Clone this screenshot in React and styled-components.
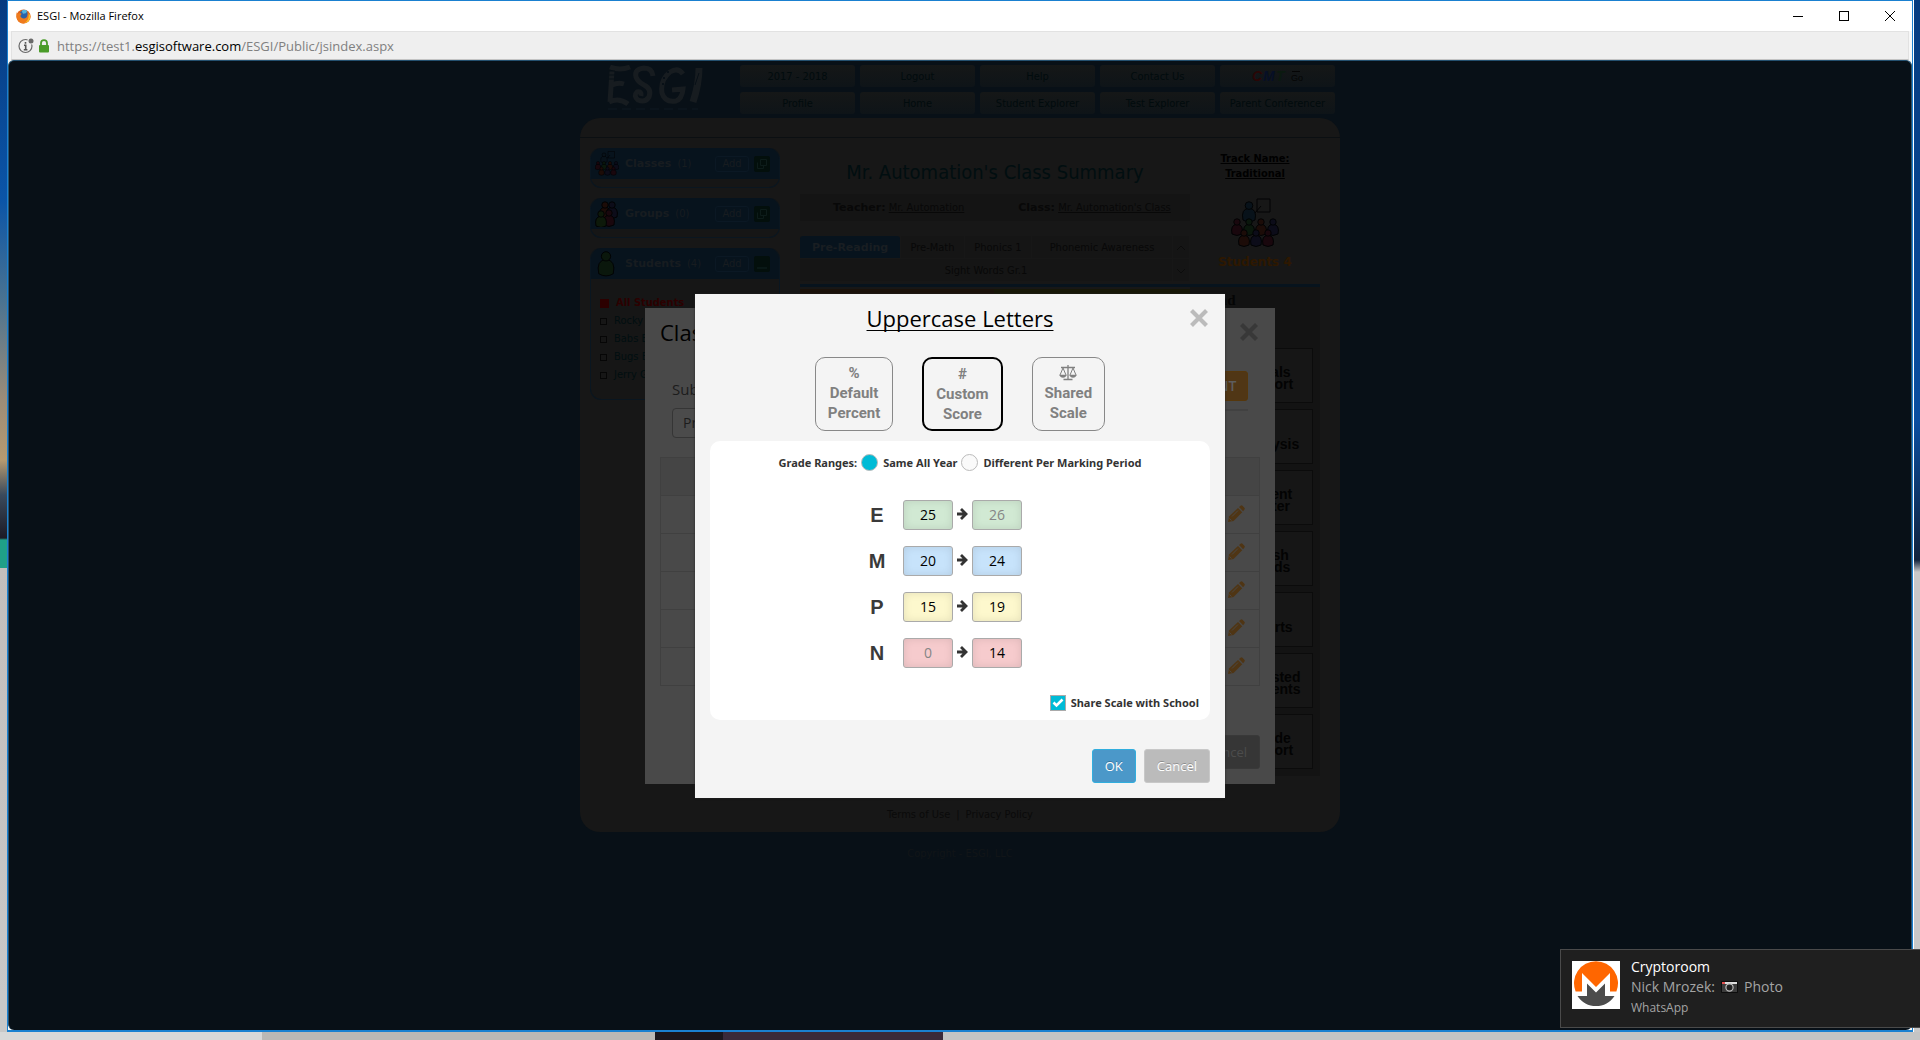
import React from "react";
import styled, { createGlobalStyle, css } from "styled-components";

const GlobalStyle = createGlobalStyle`
  * { box-sizing: border-box; }
  html, body { margin: 0; height: 100%; overflow: hidden; }
  body { font-family: "Open Sans", "Noto Sans", sans-serif; }
  button, input, select { font: inherit; margin: 0; }
  h1, h2, p, ul { margin: 0; padding: 0; }
  a { color: inherit; text-decoration: none; }
`;

const tahoma = `"DejaVu Sans Condensed", "DejaVu Sans", sans-serif`;
const verdana = `"DejaVu Sans", sans-serif`;

/* ---------- desktop and browser window ---------- */

const Desktop = styled.div`
  position: relative;
  height: 100vh;
  padding: 0 7px 8px;
  background:
    linear-gradient(90deg, #d8d8d8, #d8d8d8 262px, #bbb8b5 262px, #bbb8b5 655px, #1b161c 655px, #1b161c 723px, #3a2a3a 723px, #3a2a3a 943px, #c4c4c4 943px) bottom / 100% 8px no-repeat,
    linear-gradient(180deg, #063c80 0, #0a4ea0 420px, #12233c 560px, #c8c8c8 572px) right / 6px 100% no-repeat,
    linear-gradient(180deg, #063a80 0, #0b55a8 200px, #4a7391 300px, #9b8c78 400px, #b69a70 460px, #3a4a5c 495px, #1c1a26 538px, #1fa088 540px, #1fa088 568px, #c2bebc 568px, #c8c8c8 1000px) left / 7px 100% no-repeat;
`;

const Window = styled.div`
  display: flex;
  flex-direction: column;
  height: 100%;
  border: 1px solid #1a80d0;
  border-bottom-width: 2px;
  background: #f7f7f7;
`;

const TitleBar = styled.header`
  display: flex;
  align-items: center;
  gap: 6px;
  flex: none;
  height: 30px;
  padding: 0 8px;
  background: #fff;
  color: #000;
  font: 11px/16px "Open Sans", sans-serif;
`;

const WindowControls = styled.div`
  display: flex;
  gap: 17px;
  margin-left: auto;
`;

const WindowButton = styled.button`
  display: flex;
  align-items: center;
  justify-content: center;
  width: 29px;
  height: 28px;
  padding: 0;
  border: 0;
  background: none;
`;

const UrlBar = styled.div`
  display: flex;
  align-items: center;
  gap: 4px;
  flex: none;
  height: 29px;
  margin: 0 3px;
  padding: 0 6px;
  border: 1px solid #e2e2e2;
  border-bottom-color: #c4c4c4;
  background: #efefef;
  color: #808080;
  font: 13px/20px "Open Sans", sans-serif;
  b { font-weight: 400; color: #000; }
  span { margin-left: 3px; }
`;

const Page = styled.div`
  position: relative;
  flex: 1;
  min-height: 0;
  overflow: hidden;
  border: 1px solid #24506f;
  border-bottom: 0;
  border-radius: 6px;
  background: #081017;
  font-family: ${tahoma};
`;

/* ---------- dimmed site ---------- */

const Site = styled.div`
  width: 760px;
  max-width: 100%;
  margin: 0 auto;
`;

const SiteHeader = styled.div`
  display: flex;
  justify-content: space-between;
  height: 57px;
  padding: 4px 5px 0 26px;
`;

const NavGrid = styled.nav`
  display: grid;
  grid-template-columns: repeat(5, 115px);
  gap: 5px;
  align-content: start;
`;

const NavLink = styled.a`
  display: flex;
  align-items: center;
  justify-content: center;
  height: 22px;
  border-radius: 3px;
  background: linear-gradient(#151717, #0e1418);
  color: #010b0d;
  font-size: 11px;
`;

const Board = styled.main`
  height: 714px;
  border-radius: 20px;
  background: #171717;
`;

const BoardTop = styled.div`
  height: 20px;
  border-bottom: 1px solid #0b0f12;
`;

const Columns = styled.div`
  display: flex;
  gap: 20px;
  height: 669px;
  padding: 10px 20px 0 10px;
`;

const Sidebar = styled.aside`
  display: flex;
  flex: none;
  flex-direction: column;
  gap: 10px;
  width: 190px;
`;

const SideCard = styled.section`
  border: 1px solid #0a1620;
  border-top: 0;
  border-radius: 11px;
  background: #161616;
  min-height: 40px;
`;

const SideHead = styled.div`
  display: flex;
  align-items: center;
  height: 31px;
  padding: 0 9px 0 4px;
  border-radius: 11px 11px 0 0;
  background: #07131d;
  color: #171c20;
  font-size: 11px;
  strong { margin: 0 6px; font-family: ${verdana}; font-size: 11px; }
  svg { flex: none; }
`;

const AddButton = styled.button`
  width: 34px;
  height: 16px;
  margin: 0 5px 0 auto;
  padding: 0;
  border: 1px solid #0b1824;
  border-radius: 3px;
  background: transparent;
  color: #171c20;
  font-size: 11px;
  line-height: 14px;
`;

const StudentList = styled.ul`
  height: 120px;
  padding: 15px 9px 0;
  list-style: none;
  color: #010e10;
  font-size: 11px;
  line-height: 18px;
`;

const StudentItem = styled.li`
  display: flex;
  align-items: center;
  gap: 7px;
  color: ${(p) => (p.$all ? "#2c0000" : "inherit")};
  font-weight: ${(p) => (p.$all ? 700 : 400)};
  &::before {
    content: "";
    width: ${(p) => (p.$all ? 7 : 5)}px;
    height: ${(p) => (p.$all ? 7 : 5)}px;
    border: 1px solid ${(p) => (p.$all ? "#2c0000" : "#060606")};
    background: ${(p) => (p.$all ? "#2c0000" : "transparent")};
  }
`;

const Summary = styled.div`
  flex: 1;
  min-width: 0;
`;

const SummaryTop = styled.div`
  display: flex;
  height: 136px;
`;

const SummaryMain = styled.div`
  width: 390px;
`;

const SummaryTitle = styled.h1`
  height: 46px;
  padding-top: 12px;
  text-align: center;
  color: #010e10;
  font-size: 20px;
  line-height: 24px;
  font-weight: 400;
`;

const TeacherBar = styled.div`
  display: flex;
  gap: 54px;
  align-items: center;
  height: 27px;
  padding-left: 33px;
  background: #141414;
  color: #080808;
  font-size: 11px;
  b { font-family: ${verdana}; font-size: 11px; }
  a { text-decoration: underline; }
`;

const Tabs = styled.div`
  display: grid;
  grid-template-columns: 100px 63px 66px 140px 16px;
  gap: 1px;
  margin-top: 15px;
  color: #080808;
  font-size: 11px;
`;

const Tab = styled.button`
  height: 22px;
  padding: 0;
  border: 0;
  background: #151515;
  color: inherit;
  font-size: 11px;
  ${(p) => p.$active && css`
    border-radius: 3px 3px 0 0;
    background: #07131d;
    color: #191e22;
    font-family: ${verdana};
    font-weight: 700;
  `}
  ${(p) => p.$wide && css`grid-column: 1 / 5;`}
`;

const Track = styled.div`
  flex: 1;
  display: flex;
  flex-direction: column;
  align-items: center;
  padding-top: 3px;
  color: #000;
  font: 700 11px/15px ${tahoma};
  a { text-decoration: underline; text-align: center; }
  svg { margin: 17px 0 5px; }
  strong { color: #2e1800; font: 700 12px/18px ${verdana}; }
`;

const Results = styled.div`
  display: flex;
  height: 492px;
  border-top: 3px solid #07131d;
`;

const Strip = styled.div`
  width: ${(p) => p.$width}px;
  height: 20px;
  margin-top: 2px;
  background: ${(p) => p.$color};
`;

const Rail = styled.div`
  display: flex;
  flex-direction: column;
  align-items: flex-end;
  gap: 6px;
  flex: 1;
  padding: 2px 7px 0 0;
  background: #131313;
`;

const RailLabel = styled.div`
  width: 120px;
  height: 53px;
  color: #050505;
  font: 700 15px/22px "Liberation Serif", serif;
`;

const RailCard = styled.a`
  display: flex;
  align-items: center;
  justify-content: center;
  width: 85px;
  height: 55px;
  padding-top: ${(p) => (p.$single ? 14 : 4)}px;
  border: 1px solid #0b0b0b;
  background: #161616;
  color: #030303;
  text-align: center;
  white-space: pre-line;
  font: 700 14px/12px "Liberation Sans", sans-serif;
`;

const BoardFooter = styled.footer`
  display: flex;
  justify-content: center;
  gap: 6px;
  color: #0a0a0a;
  font: 11px/16px ${tahoma};
`;

const Copyright = styled.p`
  padding-top: 14px;
  text-align: center;
  color: #111518;
  font: 11px/16px ${tahoma};
`;

/* ---------- dialogs ---------- */

const Overlay = styled.div`
  position: absolute;
  inset: 0;
  display: flex;
  align-items: center;
  justify-content: center;
`;

const GradeDialog = styled.section`
  display: flex;
  flex-direction: column;
  width: 630px;
  height: 476px;
  padding: 11px 15px 15px;
  background: #494949;
  color: #000;
  font-family: "Open Sans", sans-serif;
`;

const DialogHead = styled.div`
  display: flex;
  justify-content: space-between;
  padding-right: 2px;
  h2 { font-size: 22px; line-height: 26px; font-weight: 400; }
`;

const CloseButton = styled.button`
  display: flex;
  align-items: center;
  justify-content: center;
  width: 18px;
  height: 26px;
  padding: 0;
  border: 0;
  background: none;
  color: ${(p) => p.$color};
`;

const FilterRow = styled.div`
  display: flex;
  justify-content: space-between;
  align-items: flex-start;
  margin: 26px 12px 0;
`;

const Subject = styled.label`
  display: flex;
  flex-direction: column;
  gap: 7px;
  margin-top: 6px;
  color: #1c1c1c;
  font-size: 15px;
  line-height: 24px;
`;

const SubjectSelect = styled.select`
  width: 190px;
  height: 30px;
  padding: 0 6px;
  border: 1px solid #353535;
  border-radius: 4px;
  background: #4b4b4b;
  color: #1c1c1c;
  font-size: 14px;
`;

const PrintWrap = styled.div`
  width: 300px;
  height: 40px;
  border-bottom: 2px solid #414141;
  text-align: right;
`;

const PrintButton = styled.button`
  width: 64px;
  height: 30px;
  padding: 0;
  border: 1px solid #55370c;
  border-radius: 3px;
  background: #503615;
  color: #5d5d5d;
  font-size: 14px;
  font-weight: 600;
`;

const TestTable = styled.table`
  width: 100%;
  margin-top: 19px;
  border-collapse: collapse;
  border: 1px solid #404040;
  th { background: #454545; }
  th, td {
    height: 38px;
    padding: 0 14px;
    border-bottom: 1px solid #404040;
    text-align: right;
  }
  svg { display: block; margin-left: auto; }
`;

const BackCancel = styled.button`
  width: 66px;
  height: 34px;
  margin: auto 0 0 auto;
  border: 1px solid #393939;
  border-radius: 3px;
  background: #363636;
  color: #4c4c4c;
  font-size: 13px;
`;

const ScoreDialog = styled.section`
  display: flex;
  flex-direction: column;
  width: 530px;
  height: 504px;
  padding: 11px 15px 15px;
  background: #f4f4f4;
  color: #333;
  font-family: "Open Sans", sans-serif;
  box-shadow: 0 0 2px #222;
`;

const ScoreHead = styled.div`
  display: grid;
  grid-template-columns: 18px 1fr 18px;
  padding: 0 2px;
  h2 {
    text-align: center;
    color: #000;
    font-size: 22px;
    line-height: 26px;
    font-weight: 400;
    text-decoration: underline;
    text-decoration-thickness: 1px;
    text-underline-offset: 3px;
    text-decoration-skip-ink: none;
  }
`;

const ModeRow = styled.div`
  display: flex;
  justify-content: center;
  gap: 29px;
  margin-top: 26px;
`;

const ModeButton = styled.button`
  display: flex;
  flex-direction: column;
  align-items: center;
  height: 74px;
  padding: 5px 12px;
  border: ${(p) => (p.$active ? "2px solid #000" : "1px solid #888")};
  border-radius: 10px;
  background: transparent;
  color: #808080;
  font: 700 15px/20px Roboto, sans-serif;
  white-space: pre-line;
  svg { margin: 2px 0; }
`;

const ScorePanel = styled.div`
  display: flex;
  flex-direction: column;
  align-items: center;
  height: 279px;
  margin: 10px 0 0;
  padding: 13px 11px 8px;
  border-radius: 10px;
  background: #fff;
  color: #333;
`;

const RangeRow = styled.div`
  display: flex;
  align-items: center;
  gap: 4px;
  height: 18px;
  font: 700 11px/18px "Noto Sans", sans-serif;
`;

const OptionLabel = styled.label`
  display: flex;
  align-items: center;
  gap: 5px;
  font: 700 11px/18px "Noto Sans", sans-serif;
`;

const Radio = styled.input`
  appearance: none;
  width: 17px;
  height: 17px;
  border: 1px solid #bbb;
  border-radius: 50%;
  background: #fafafa;
  &:checked { background: #00bbd6; }
`;

const ScoreRows = styled.div`
  display: flex;
  flex-direction: column;
  gap: 16px;
  width: 184px;
  margin-top: 28px;
`;

const ScoreRow = styled.div`
  display: flex;
  align-items: center;
  gap: 3px;
  height: 30px;
`;

const Grade = styled.label`
  width: 18px;
  margin-right: 14px;
  text-align: center;
  color: #3a3a3a;
  font: 700 20px/30px "Liberation Sans", sans-serif;
`;

const ScoreInput = styled.input`
  width: 50px;
  height: 30px;
  padding: 0;
  border: 1px solid #aaa;
  border-radius: 3px;
  background: ${(p) => p.$tone};
  box-shadow: inset 0 0 8px rgba(0, 0, 0, 0.1);
  color: #000;
  text-align: center;
  font-size: 14px;
  &:disabled { color: #858585; }
`;

const ShareLabel = styled(OptionLabel)`
  margin: auto 0 0 auto;
`;

const CheckWrap = styled.span`
  display: grid;
  place-items: center;
  input, svg { grid-area: 1 / 1; }
  svg { pointer-events: none; }
`;

const Check = styled.input`
  appearance: none;
  width: 16px;
  height: 16px;
  border: 1px solid #aaa;
  background: #fff;
  &:checked { background: #00bbd6; }
`;

const Actions = styled.div`
  display: flex;
  justify-content: flex-end;
  gap: 8px;
  margin-top: auto;
`;

const ActionButton = styled.button`
  height: 34px;
  padding: 0 12px;
  border: 1px solid ${(p) => (p.$primary ? "#31aede" : "#c8c8c8")};
  border-radius: 3px;
  background: ${(p) => (p.$primary ? "#4b98c9" : "#bbb")};
  color: #fff;
  font-size: 13px;
  text-shadow: 0 -1px 0 rgba(0, 0, 0, 0.25);
`;

/* ---------- notification ---------- */

const Toast = styled.aside`
  position: absolute;
  right: 0;
  bottom: 12px;
  display: flex;
  gap: 11px;
  width: 360px;
  height: 79px;
  padding: 11px;
  border: 1px solid #4a4a4a;
  border-right: 0;
  background: #1f1f1f;
  color: #a4a4a4;
  font: 14px/20px "Open Sans", sans-serif;
  svg { flex: none; }
`;

const ToastText = styled.div`
  margin-top: -4px;
  strong { display: block; font-weight: 400; color: #fff; }
  p { display: flex; align-items: center; gap: 6px; }
  small { display: block; font-size: 12px; line-height: 22px; }
`;

/* ---------- drawings ---------- */

const FirefoxIcon = () => (
  <svg width="15" height="15" viewBox="0 0 16 16" aria-hidden="true">
    <circle cx="8" cy="8" r="7.500" fill="#e2631b" />
    <circle cx="8.600" cy="6.400" r="5" fill="#2b63a8" />
    <path d="M6 2c2-1.600 4-1.400 6 0l-1.500 2.500-3 .5z" fill="#53b4dd" />
    <path d="M.8 3.500 2.300 5C3.500 3.800 5 4 6 5L4.600 7.500c1 3 4.500 3.500 7 1 1-2 .8-4.500.4-6 3 2.200 4.200 5.500 2.800 8.500C12.500 16.500 4 17 1.300 11.500.2 9 .1 6 .8 3.500z" fill="#ef7b1d" />
    <path d="M14.900 6c1 4-1 8-5.900 9 3-2 5-5 4.500-9.500z" fill="#f8c32a" />
  </svg>
);

const InfoIcon = () => (
  <svg width="16" height="16" viewBox="0 0 16 16" aria-hidden="true">
    <circle cx="7.500" cy="8" r="6.500" fill="none" stroke="#6a6a6a" strokeWidth="1.200" />
    <circle cx="13" cy="3" r="3.600" fill="#efefef" />
    <circle cx="13" cy="3" r="2.500" fill="#6a6a6a" />
    <path d="M7.500 4v1.800M6 7.200h1.700v4.300M5.800 11.700h3.600" stroke="#555" strokeWidth="1.600" fill="none" />
  </svg>
);

const LockIcon = () => (
  <svg width="12" height="14" viewBox="0 0 12 14" aria-hidden="true">
    <rect x="1" y="6" width="10" height="7.500" rx="1" fill="#4a9c28" />
    <path d="M3 7V4.200a3 3 0 0 1 6 0V7" fill="none" stroke="#4a9c28" strokeWidth="1.800" />
  </svg>
);

const Logo = () => (
  <svg width="100" height="50" viewBox="0 0 100 50" role="img" aria-label="ESGI" fill="none" stroke="#171c20" strokeWidth="4">
    <path d="M6 6q-1 16-2 31M4 2q10 4 20 0M6 20q6-3 12-1M3 37q10-5 19 2" strokeWidth="5" />
    <path d="M2 6h7M2 10h7M2 14h7" stroke="#081017" strokeWidth="1" />
    <path d="M47 11q-1-8-9-8-10 1-8 9 2 5 8 8 8 4 5 12-4 6-11 3-5-4-1-8 5-1 4 4" strokeWidth="5" />
    <path d="M77 9q-5-7-13-2-10 8-8 21 3 10 14 8 6-2 7-12l-11 1" strokeWidth="5" />
    <path d="M57 13h2M61 7h2M56 19h2" stroke="#081017" strokeWidth="2" />
    <path d="M93 3q0 16-6 34" strokeWidth="7" />
    <path d="M93 8 89 20" stroke="#081017" strokeWidth="1" />
    <path d="M2 44h90" stroke="#0b141c" strokeWidth="2" strokeDasharray="9 5" />
  </svg>
);

const Person = ({ x, y, s = 1, fill }) => (
  <g transform={`translate(${x} ${y}) scale(${s})`} fill={fill} stroke="#020304" strokeWidth={1 / s}>
    <path d="M-5 15q-2-9 5-10 7 1 5 10-5 3-10 0z" />
    <circle cx="0" cy="3" r="3.200" />
  </g>
);

const ClassIcon = ({ width, height }) => (
  <svg width={width} height={height} viewBox="0 0 48 50" aria-hidden="true">
    <path d="M26 1h13v13H26zM24 15l6-7" fill="none" stroke="#020304" />
    <Person x={18} y={4} s={1.2} fill="#08121a" />
    <Person x={6} y={21} fill="#19070d" />
    <Person x={18} y={21} fill="#0a170c" />
    <Person x={30} y={21} fill="#1c0c08" />
    <Person x={42} y={21} fill="#0c0c19" />
    <Person x={13} y={32} fill="#1c0c08" />
    <Person x={25} y={32} fill="#0c0c19" />
    <Person x={37} y={32} fill="#19070d" />
  </svg>
);

const GroupIcon = () => (
  <svg width="24" height="26" viewBox="0 0 24 26" aria-hidden="true">
    <Person x={10} y={1} fill="#1c0c08" />
    <Person x={17} y={1} fill="#0c0c19" />
    <Person x={14} y={9} fill="#19070d" />
    <Person x={6} y={10} fill="#0d190a" />
  </svg>
);

const StudentIcon = () => (
  <svg width="24" height="26" viewBox="0 0 24 26" aria-hidden="true">
    <Person x={11} y={1} s={1.45} fill="#0a170c" />
  </svg>
);

const PopIcon = ({ open }) => (
  <svg width="16" height="16" viewBox="0 0 16 16" aria-hidden="true">
    <rect width="16" height="16" rx="2" fill="#030f0c" />
    {open ? <path d="M3 12h10" stroke="#0d1c1a" strokeWidth="1.500" /> : <path d="M6.500 3.500h6v6h-6zM3.500 6.500v6h6v-3" fill="none" stroke="#0d1c1a" />}
  </svg>
);

const CloseIcon = () => (
  <svg width="18" height="18" viewBox="0 0 18 18" aria-hidden="true">
    <path d="M1.500 1.500l15 15M16.500 1.500l-15 15" stroke="currentColor" strokeWidth="4.200" />
  </svg>
);

const PencilIcon = () => (
  <svg width="18" height="18" viewBox="0 0 18 18" aria-hidden="true" fill="#4f3514">
    <path d="M1 17l1-5.500L11 3l4.200 4.200L6.500 16z" />
    <path d="M12 2l1.500-1.300q1-.8 2 .1l1.900 1.900q.8 1-.1 2L16.100 6.200z" />
    <path d="M5 11.500l6-6M2.500 13.500l2 2" stroke="#494949" strokeWidth=".9" />
  </svg>
);

const ScaleIcon = () => (
  <svg width="18" height="16" viewBox="0 0 18 16" aria-hidden="true" fill="none" stroke="#808080">
    <path d="M2 2.500h14M9 0v14M4.500 14.500h9" strokeWidth="1.300" />
    <path d="M4 3 1 10M4 3l3 7M14 3l-3 7M14 3l3 7" />
    <path d="M.5 10h7q-1 2.500-3.500 2.500T.5 10zM10.500 10h7q-1 2.500-3.500 2.500T10.500 10z" fill="#808080" strokeWidth=".5" />
  </svg>
);

const ArrowIcon = () => (
  <svg width="13" height="16" viewBox="0 0 13 16" aria-hidden="true">
    <path d="M5 2l5 5-5 5M1 7h9" fill="none" stroke="#333" strokeWidth="2.800" />
  </svg>
);

const TickIcon = () => (
  <svg width="12" height="12" viewBox="0 0 12 12" aria-hidden="true">
    <path d="M1.500 5.500l3 3 6-6" fill="none" stroke="#fff" strokeWidth="2.600" />
  </svg>
);

const MoneroIcon = () => (
  <svg width="48" height="48" viewBox="0 0 48 48" role="img" aria-label="Cryptoroom avatar">
    <rect width="48" height="48" fill="#fff" />
    <path d="M3.600 30.500A22 22 0 1 1 44.400 30.500H38V12L24 26 10 12v18.500z" fill="#ff6600" />
    <path d="M5.500 35H15V22.500l9 9 9-9V35h9.500a22 22 0 0 1-37 0z" fill="#4c4c4c" />
  </svg>
);

const CameraIcon = () => (
  <svg width="17" height="14" viewBox="0 0 17 14" role="img" aria-label="camera">
    <rect x="0" y="1" width="17" height="12" rx="1" fill="#0d0d0d" />
    <rect x="1" y="4" width="15" height="8" fill="#3c3c3c" />
    <rect x="1" y="2" width="15" height="2" fill="#ddd" />
    <rect x="1" y="2" width="3" height="2" fill="#e05050" />
    <circle cx="8.500" cy="7.500" r="3.600" fill="#222" stroke="#bbb" strokeWidth="1.200" />
  </svg>
);

/* ---------- data ---------- */

const nav = ["2017 - 2018", "Logout", "Help", "Contact Us", null, "Profile", "Home", "Student Explorer", "Test Explorer", "Parent Conferencer"];
const rail = ["Totals\nReport", "Analysis", "Parent\nLetter", "Flash\nCards", "Charts", "Untested\nStudents", "Grade\nReport"];
const scores = [
  { grade: "E", from: 25, to: 26, tone: "#d1e9d3", locked: "to" },
  { grade: "M", from: 20, to: 24, tone: "#c7e3fb" },
  { grade: "P", from: 15, to: 19, tone: "#fdf8cd" },
  { grade: "N", from: 0, to: 14, tone: "#f6cbcd", locked: "from" },
];

const SidePanel = ({ icon, title, count, open, children }) => (
  <SideCard>
    <SideHead>
      {icon}
      <strong>{title}</strong>
      <span>({count})</span>
      <AddButton>Add</AddButton>
      <PopIcon open={open} />
    </SideHead>
    {children}
  </SideCard>
);

export default function App() {
  return (
    <Desktop>
      <GlobalStyle />
      <Window>
        <TitleBar>
          <FirefoxIcon />
          <span>ESGI - Mozilla Firefox</span>
          <WindowControls>
            <WindowButton aria-label="Minimize">
              <svg width="10" height="10"><path d="M0 5.500h10" stroke="#000" /></svg>
            </WindowButton>
            <WindowButton aria-label="Maximize">
              <svg width="10" height="10"><rect x=".5" y=".5" width="9" height="9" fill="none" stroke="#000" /></svg>
            </WindowButton>
            <WindowButton aria-label="Close window">
              <svg width="10" height="10"><path d="M0 0l10 10M10 0 0 10" stroke="#000" /></svg>
            </WindowButton>
          </WindowControls>
        </TitleBar>
        <UrlBar>
          <InfoIcon />
          <LockIcon />
          <span>https://test1.<b>esgisoftware.com</b>/ESGI/Public/jsindex.aspx</span>
        </UrlBar>

        <Page>
          <Site>
            <SiteHeader>
              <Logo />
              <NavGrid>
                {nav.map((label, i) =>
                  label ? (
                    <NavLink href="#" key={i}>{label}</NavLink>
                  ) : (
                    <NavLink href="#" key={i}>
                      <svg width="52" height="14" aria-label="CMT Go" role="img" fontFamily="Liberation Sans" fontWeight="700" fontStyle="italic" fontSize="14">
                        <text x="0" y="12" fill="#2a0606">C</text>
                        <text x="11" y="12" fill="#060f26">M</text>
                        <text x="24" y="12" fill="#0b1a10">T</text>
                        <text x="39" y="12" fill="#050505" fontSize="9" fontStyle="normal" fontWeight="400">Go</text>
                        <path d="M40 2.500h8" stroke="#050505" />
                      </svg>
                    </NavLink>
                  )
                )}
              </NavGrid>
            </SiteHeader>

            <Board>
              <BoardTop />
              <Columns>
                <Sidebar>
                  <SidePanel icon={<ClassIcon width={24} height={25} />} title="Classes" count={1} />
                  <SidePanel icon={<GroupIcon />} title="Groups" count={0} />
                  <SidePanel icon={<StudentIcon />} title="Students" count={4} open>
                    <StudentList>
                      <StudentItem $all>All Students</StudentItem>
                      <StudentItem>Rocky B</StudentItem>
                      <StudentItem>Babs B</StudentItem>
                      <StudentItem>Bugs B</StudentItem>
                      <StudentItem>Jerry G</StudentItem>
                    </StudentList>
                  </SidePanel>
                </Sidebar>

                <Summary>
                  <SummaryTop>
                    <SummaryMain>
                      <SummaryTitle>Mr. Automation's Class Summary</SummaryTitle>
                      <TeacherBar>
                        <span><b>Teacher:</b> <a href="#">Mr. Automation</a></span>
                        <span><b>Class:</b> <a href="#">Mr. Automation's Class</a></span>
                      </TeacherBar>
                      <Tabs>
                        <Tab $active>Pre-Reading</Tab>
                        <Tab>Pre-Math</Tab>
                        <Tab>Phonics 1</Tab>
                        <Tab>Phonemic Awareness</Tab>
                        <Tab aria-label="Scroll up">
                          <svg width="8" height="6"><path d="M0 5l4-4 4 4" fill="none" stroke="#0c0c0c" /></svg>
                        </Tab>
                        <Tab $wide>Sight Words Gr.1</Tab>
                        <Tab aria-label="Scroll down">
                          <svg width="8" height="6"><path d="M0 1l4 4 4-4" fill="none" stroke="#0c0c0c" /></svg>
                        </Tab>
                      </Tabs>
                    </SummaryMain>
                    <Track>
                      <a href="#">Track Name:<br />Traditional</a>
                      <ClassIcon width={48} height={50} />
                      <strong>Students 4</strong>
                    </Track>
                  </SummaryTop>
                  <Results>
                    <Strip $width={194} $color="#1b120a" />
                    <Strip $width={196} $color="#171707" />
                    <Rail>
                      <RailLabel>Grand</RailLabel>
                      {rail.map((label) => (
                        <RailCard href="#" key={label} $single={!label.includes("\n")}>{label}</RailCard>
                      ))}
                    </Rail>
                  </Results>
                </Summary>
              </Columns>
              <BoardFooter>
                <a href="#">Terms of Use</a>
                <span>|</span>
                <a href="#">Privacy Policy</a>
              </BoardFooter>
            </Board>
            <Copyright>Copyright - ESGI, LLC</Copyright>
          </Site>

          <Overlay>
            <GradeDialog>
              <DialogHead>
                <h2>Class</h2>
                <CloseButton $color="#383838" aria-label="Close class dialog"><CloseIcon /></CloseButton>
              </DialogHead>
              <FilterRow>
                <Subject>
                  Subject
                  <SubjectSelect><option>Pre-Reading</option></SubjectSelect>
                </Subject>
                <PrintWrap><PrintButton>PRINT</PrintButton></PrintWrap>
              </FilterRow>
              <TestTable>
                <thead><tr><th /></tr></thead>
                <tbody>
                  {[1, 2, 3, 4, 5].map((n) => (
                    <tr key={n}><td><PencilIcon /></td></tr>
                  ))}
                </tbody>
              </TestTable>
              <BackCancel>Cancel</BackCancel>
            </GradeDialog>
          </Overlay>

          <Overlay>
            <ScoreDialog role="dialog" aria-labelledby="score-title">
              <ScoreHead>
                <span />
                <h2 id="score-title">Uppercase Letters</h2>
                <CloseButton $color="#bbb" aria-label="Close"><CloseIcon /></CloseButton>
              </ScoreHead>
              <ModeRow>
                <ModeButton><span>%</span>{"Default\nPercent"}</ModeButton>
                <ModeButton $active><span>#</span>{"Custom\nScore"}</ModeButton>
                <ModeButton><ScaleIcon />{"Shared\nScale"}</ModeButton>
              </ModeRow>
              <ScorePanel>
                <RangeRow role="radiogroup" aria-label="Grade Ranges">
                  <span>Grade Ranges:</span>
                  <OptionLabel><Radio type="radio" name="range" defaultChecked />Same All Year</OptionLabel>
                  <OptionLabel><Radio type="radio" name="range" />Different Per Marking Period</OptionLabel>
                </RangeRow>
                <ScoreRows>
                  {scores.map((s) => (
                    <ScoreRow key={s.grade}>
                      <Grade htmlFor={`from-${s.grade}`}>{s.grade}</Grade>
                      <ScoreInput id={`from-${s.grade}`} $tone={s.tone} defaultValue={s.from} disabled={s.locked === "from"} />
                      <ArrowIcon />
                      <ScoreInput aria-label={`${s.grade} to`} $tone={s.tone} defaultValue={s.to} disabled={s.locked === "to"} />
                    </ScoreRow>
                  ))}
                </ScoreRows>
                <ShareLabel>
                  <CheckWrap><Check type="checkbox" defaultChecked /><TickIcon /></CheckWrap>
                  Share Scale with School
                </ShareLabel>
              </ScorePanel>
              <Actions>
                <ActionButton $primary>OK</ActionButton>
                <ActionButton>Cancel</ActionButton>
              </Actions>
            </ScoreDialog>
          </Overlay>
        </Page>
      </Window>

      <Toast>
        <MoneroIcon />
        <ToastText>
          <strong>Cryptoroom</strong>
          <p>Nick Mrozek: <CameraIcon /> Photo</p>
          <small>WhatsApp</small>
        </ToastText>
      </Toast>
    </Desktop>
  );
}
